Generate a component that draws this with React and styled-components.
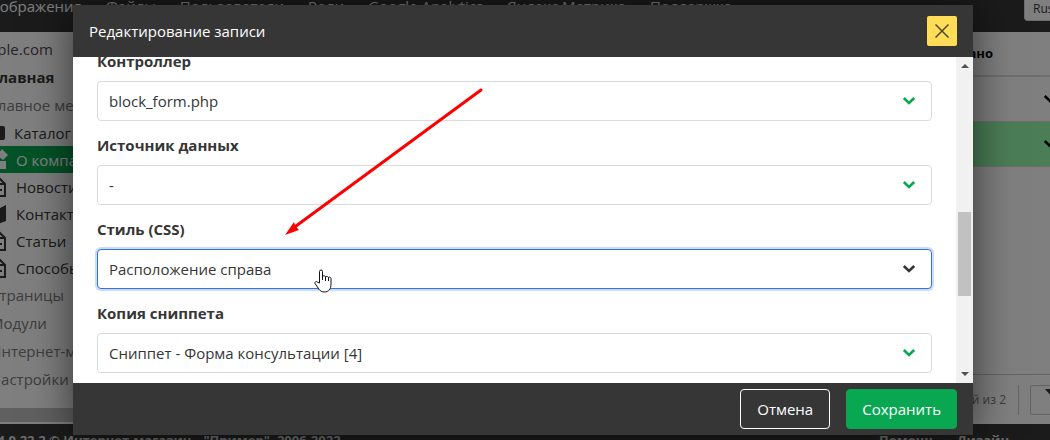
import styled, { createGlobalStyle } from "styled-components";

const MENU = ["Изображения", "Файлы", "Пользователи", "Роли", "Google Analytics", "Яндекс.Метрика", "Поддержка"];

const TREE = [
  { icon: "folder", label: "Каталог" },
  { icon: "home", label: "О компании", active: true },
  { icon: "page", label: "Новости" },
  { icon: "map", label: "Контакты" },
  { icon: "page", label: "Статьи" },
  { icon: "page", label: "Способы оплаты" },
];

const SECTIONS = ["Страницы", "Модули", "Интернет-магазин", "Настройки"];

const FIELDS = [
  { id: "controller", label: "Контроллер", value: "block_form.php" },
  { id: "source", label: "Источник данных", value: "-" },
  { id: "style", label: "Стиль (CSS)", value: "Расположение справа", focused: true },
  { id: "copy", label: "Копия сниппета", value: "Сниппет - Форма консультации [4]" },
];

const TreeIcon = ({ name }) => (
  <svg width="18" height="22" viewBox="0 0 18 22" aria-hidden="true">
    {name === "folder" && <rect x="0" y="4" width="15" height="14" rx="2" fill="currentColor" />}
    {name === "home" && (
      <path d="M2 3h6v6H2zM12 0l6 6-5 5-6-5zM2 12h14v8H2z" fill="currentColor" />
    )}
    {name === "page" && (
      <path
        d="M1 2h8l6 6v12H1zM9 2v6h6M4 14h8"
        fill="none"
        stroke="currentColor"
        strokeWidth="2"
      />
    )}
    {name === "map" && <path d="M1 4l7 2 8-4v16l-8 3-7-2z" fill="currentColor" />}
  </svg>
);

const Chevron = () => (
  <svg width="14" height="14" viewBox="0 0 14 14" aria-hidden="true">
    <path d="M1.800 4l5.200 5 5.200-5" fill="none" stroke="currentColor" strokeWidth="2.600" />
  </svg>
);

const App = () => {
  return (
    <Screen>
      <GlobalStyle />
      <Page>
        <TopBar>
          <Menu>
            {MENU.map((item) => (
              <MenuLink href="#" key={item}>{item}</MenuLink>
            ))}
          </Menu>
          <Language aria-label="Язык" defaultValue="ru">
            <option value="ru">Russian</option>
          </Language>
        </TopBar>
        <Main>
          <Sidebar>
            <SideLink href="#" $tone="site">sample.com</SideLink>
            <SideLink href="#" $tone="bold">Главная</SideLink>
            <SideLink href="#" $tone="muted">Главное меню</SideLink>
            {TREE.map(({ icon, label, active }) => (
              <TreeLink href="#" key={label} $active={active} $tight={icon === "folder"}>
                <TreeIcon name={icon} />
                {label}
              </TreeLink>
            ))}
            {SECTIONS.map((item) => (
              <SideLink href="#" key={item} $tone="muted">{item}</SideLink>
            ))}
            <SideScroll />
          </Sidebar>
          <Content>
            <TableHead>Показано</TableHead>
            <TableRow><Chevron /></TableRow>
            <TableRow $active><Chevron /></TableRow>
            <Pager>
              <PagerText>Записей из 2</PagerText>
              <FilterButton type="button" aria-label="Фильтр">
                <svg width="16" height="14" viewBox="0 0 16 14" aria-hidden="true">
                  <path d="M0 0h16l-6 7v6l-4-2V7z" fill="currentColor" />
                </svg>
              </FilterButton>
            </Pager>
          </Content>
        </Main>
        <Footer>
          <span>v4.0.22.2 © Интернет-магазин</span>
          <span>"Пример", 2006-2022</span>
          <FooterLinks>
            <FooterLink href="#">Помощь</FooterLink>
            <FooterLink href="#">Дизайн</FooterLink>
          </FooterLinks>
        </Footer>
      </Page>

      <Backdrop>
        <Dialog role="dialog" aria-labelledby="dialog-title">
          <DialogHeader>
            <DialogTitle id="dialog-title">Редактирование записи</DialogTitle>
            <CloseButton type="button" aria-label="Закрыть">
              <svg width="14" height="14" viewBox="0 0 14 14" aria-hidden="true">
                <path d="M.5.5l13 13M13.500.5L.5 13.500" stroke="currentColor" strokeWidth="1.500" />
              </svg>
            </CloseButton>
          </DialogHeader>
          <DialogBody>
            <Form>
              {FIELDS.map(({ id, label, value, focused }) => (
                <Field key={id}>
                  <Label htmlFor={id}>{label}</Label>
                  <SelectWrap $focused={focused}>
                    <Select id={id} defaultValue={value} $focused={focused}>
                      <option>{value}</option>
                    </Select>
                    <Chevron />
                  </SelectWrap>
                </Field>
              ))}
            </Form>
            <ScrollTrack>
              <ScrollArrow />
              <ScrollThumb />
              <ScrollArrow $down />
            </ScrollTrack>
          </DialogBody>
          <DialogFooter>
            <Button type="button">Отмена</Button>
            <Button type="button" $primary>Сохранить</Button>
          </DialogFooter>
        </Dialog>
      </Backdrop>

      <Arrow viewBox="0 0 200 150" aria-hidden="true">
        <path d="M196 4L11 140" stroke="#ff0000" strokeWidth="3" strokeLinecap="round" />
        <path d="M0 149L9 136l1 3 3 4 1 1z" fill="#ff0000" />
      </Arrow>
      <Hand viewBox="0 0 18 24" aria-hidden="true">
        <path
          d="M5.500 14V2.500a1.500 1.500 0 0 1 3 0V7.500c0-1 3-1 3 .5 0-1 3-.8 3 .7 0-1 2.500-.8 2.500.8V15c0 5-2 8-7 8-3 0-5-2-6.500-5L1 14.500c-.6-1.500 1.200-2.800 2.500-1.300z"
          fill="#ffffff"
          stroke="#101020"
          strokeLinejoin="round"
        />
        <path d="M8.500 7v4M11.500 8v4M14.500 8.500V12" stroke="#101020" />
      </Hand>
    </Screen>
  );
};

export default App;

const GlobalStyle = createGlobalStyle`
  * {
    box-sizing: border-box;
  }
  body {
    margin: 0;
    overflow: hidden;
    font-family: "Open Sans", "Noto Sans", sans-serif;
    font-size: 15px;
    line-height: 24px;
    color: #363636;
  }
  a {
    text-decoration: none;
  }
`;

const Screen = styled.div`
  position: relative;
  height: 100vh;
  overflow: hidden;
`;

const Page = styled.div`
  display: flex;
  flex-direction: column;
  height: 100vh;
  margin: 0 -40px 0 -32px;
  background: #ffffff;
`;

const TopBar = styled.header`
  display: flex;
  justify-content: space-between;
  align-items: flex-start;
  height: 32px;
  background: #363636;
`;

const Menu = styled.nav`
  display: flex;
  gap: 24px;
  padding-left: 13px;
  margin-top: -6px;
`;

const MenuLink = styled.a`
  color: #ffffff;
  white-space: nowrap;
`;

const Language = styled.select`
  appearance: none;
  width: 66px;
  height: 21px;
  padding: 0 8px 6px;
  border: 1px solid #dbdbdb;
  border-top: 0;
  border-radius: 0 0 4px 4px;
  background: #ffffff;
  color: #363636;
  font-family: inherit;
  font-size: 12px;
`;

const Main = styled.div`
  display: flex;
  flex: 1;
  min-height: 0;
`;

const Sidebar = styled.aside`
  display: flex;
  flex-direction: column;
  width: 240px;
  padding-top: 3px;
  overflow: hidden;
`;

const tones = {
  site: { color: "#4a4a4a", weight: 400, indent: 0 },
  bold: { color: "#363636", weight: 700, indent: 22 },
  muted: { color: "#7a7a7a", weight: 400, indent: 22 },
};

const SideLink = styled.a`
  flex: none;
  padding-left: ${({ $tone }) => tones[$tone].indent}px;
  line-height: 28px;
  white-space: nowrap;
  color: ${({ $tone }) => tones[$tone].color};
  font-weight: ${({ $tone }) => tones[$tone].weight};
`;

const TreeLink = styled.a`
  display: flex;
  flex: none;
  align-items: center;
  gap: ${({ $tight }) => ($tight ? 6 : 8)}px;
  height: 27px;
  padding-left: 22px;
  white-space: nowrap;
  color: ${({ $active }) => ($active ? "#ffffff" : "#363636")};
  background: ${({ $active }) => ($active ? "#09a751" : "transparent")};
`;

const SideScroll = styled.div`
  flex: none;
  height: 14px;
  margin-top: auto;
  margin-bottom: 2px;
  background: #c1c1c1;
`;

const Content = styled.section`
  display: flex;
  flex: 1;
  flex-direction: column;
`;

const TableHead = styled.div`
  height: 45px;
  padding: 9px 97px 0 0;
  border-bottom: 2px solid #dbdbdb;
  color: #000000;
  font-size: 13px;
  font-weight: 700;
  text-align: right;
`;

const TableRow = styled.div`
  display: flex;
  justify-content: flex-end;
  align-items: center;
  height: 45px;
  padding-right: 33px;
  border-bottom: 1px solid #dbdbdb;
  color: #000000;
  background: ${({ $active }) => ($active ? "#97fbad" : "#ffffff")};
`;

const Pager = styled.div`
  display: flex;
  justify-content: flex-end;
  align-items: center;
  height: 50px;
  margin-top: auto;
  border-top: 1px solid #c8c8c8;
`;

const PagerText = styled.span`
  padding-right: 12px;
  margin-right: 11px;
  border-right: 1px solid #c8c8c8;
  color: #7a7a7a;
  font-size: 12px;
  line-height: 30px;
`;

const FilterButton = styled.button`
  width: 60px;
  height: 30px;
  padding: 0 0 4px 14px;
  border: 1px solid #c8c8c8;
  border-radius: 2px;
  background: #ffffff;
  color: #363636;
  text-align: left;
`;

const Footer = styled.footer`
  display: flex;
  gap: 12px;
  height: 16px;
  padding: 4px 81px 0 22px;
  overflow: hidden;
  background: #363636;
  color: #dbdbdb;
  font-size: 13px;
  font-weight: 700;
  white-space: nowrap;
`;

const FooterLinks = styled.nav`
  display: flex;
  gap: 20px;
  margin-left: auto;
`;

const FooterLink = styled.a`
  color: inherit;
`;

const Backdrop = styled.div`
  position: absolute;
  inset: 0;
  padding: 5px 77px 5px 73px;
  background: rgba(0, 0, 0, 0.5);
`;

const Dialog = styled.div`
  display: flex;
  flex-direction: column;
  height: 100%;
  background: #ffffff;
  box-shadow: 0 0 40px rgba(0, 0, 0, 0.6);
`;

const DialogHeader = styled.header`
  display: flex;
  flex: none;
  justify-content: space-between;
  align-items: center;
  height: 52px;
  padding: 0 16px;
  background: #363636;
`;

const DialogTitle = styled.h2`
  margin: 0;
  color: #ffffff;
  font-size: 15px;
  font-weight: 400;
`;

const CloseButton = styled.button`
  display: flex;
  justify-content: center;
  align-items: center;
  width: 30px;
  height: 30px;
  padding: 0;
  border: 0;
  border-radius: 2px;
  background: #ffdd57;
  color: #4a4a2a;
`;

const DialogBody = styled.div`
  display: flex;
  flex: 1;
  min-height: 0;
`;

const Form = styled.form`
  display: flex;
  flex: 1;
  flex-direction: column;
  justify-content: flex-end;
  gap: 12px;
  padding: 0 24px 10px;
  overflow: hidden;
`;

const Field = styled.div`
  display: flex;
  flex: none;
  flex-direction: column;
  gap: 8px;
`;

const Label = styled.label`
  font-weight: 700;
`;

const SelectWrap = styled.div`
  position: relative;
  color: ${({ $focused }) => ($focused ? "#363636" : "#09a751")};

  svg {
    position: absolute;
    top: 13px;
    right: 16px;
    pointer-events: none;
  }
`;

const Select = styled.select`
  appearance: none;
  display: block;
  width: 100%;
  height: 40px;
  padding: 0 40px 0 11px;
  border: 1px solid ${({ $focused }) => ($focused ? "#3273dc" : "#dbdbdb")};
  border-radius: 4px;
  background: #ffffff;
  box-shadow: ${({ $focused }) => ($focused ? "0 0 0 2px rgba(50, 115, 220, 0.25)" : "none")};
  color: #363636;
  font-family: inherit;
  font-size: 15px;
`;

const ScrollTrack = styled.div`
  display: flex;
  flex-direction: column;
  justify-content: space-between;
  align-items: center;
  width: 17px;
  padding: 7px 0;
  background: #f1f1f1;
`;

const ScrollArrow = styled.span`
  border: 4px solid transparent;
  border-top: ${({ $down }) => ($down ? "4px solid #505050" : "0")};
  border-bottom: ${({ $down }) => ($down ? "0" : "4px solid #505050")};
`;

const ScrollThumb = styled.span`
  width: 13px;
  height: 84px;
  margin-top: 68px;
  background: #c1c1c1;
`;

const DialogFooter = styled.footer`
  display: flex;
  flex: none;
  justify-content: flex-end;
  align-items: center;
  gap: 16px;
  height: 52px;
  padding: 0 16px;
  background: #363636;
`;

const Button = styled.button`
  min-width: 90px;
  height: 40px;
  padding: 0 15px;
  border: 1px solid ${({ $primary }) => ($primary ? "#09a751" : "#ffffff")};
  border-radius: 4px;
  background: ${({ $primary }) => ($primary ? "#09a751" : "transparent")};
  color: #ffffff;
  font-family: inherit;
  font-size: 15px;
`;

const Arrow = styled.svg`
  position: absolute;
  top: 86px;
  left: 285px;
  width: 200px;
  height: 150px;
  fill: none;
  pointer-events: none;
`;

const Hand = styled.svg`
  position: absolute;
  top: 269px;
  left: 314px;
  width: 18px;
  height: 24px;
  fill: none;
  pointer-events: none;
`;
